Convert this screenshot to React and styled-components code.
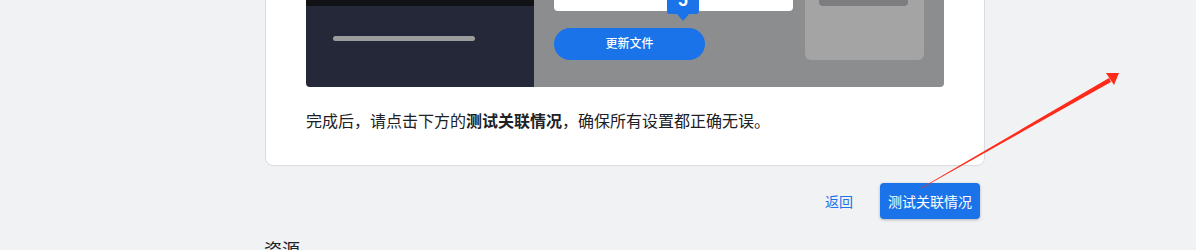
import React from 'react';
import styled, { createGlobalStyle } from 'styled-components';

const GlobalStyle = createGlobalStyle`
  html, body {
    margin: 0;
    padding: 0;
    background: #f1f2f4;
    font-family: Roboto, "Noto Sans CJK SC", sans-serif;
    color: #202124;
    overflow: hidden;
  }
`;

const Page = styled.div`
  position: relative;
  width: 1196px;
  height: 250px;
  overflow: hidden;
`;

const Content = styled.div`
  width: 720px;
  margin: -60px 0 0 265px;
`;

const Card = styled.div`
  background: #fff;
  border: 1px solid #dadce0;
  border-radius: 8px;
  padding: 20px 40px 31px 40px;
`;

const Shot = styled.div`
  display: flex;
  height: 126px;
  border-radius: 0 0 4px 4px;
  overflow: hidden;
`;

const DarkSide = styled.div`
  width: 228px;
  background: #242838;
  display: flex;
  flex-direction: column;
`;

const TopStrip = styled.div`
  height: 45px;
  background: #111216;
`;

const SideBar = styled.div`
  margin: 30px 0 0 27px;
  width: 142px;
  height: 5px;
  border-radius: 3px;
  background: #9c9c9c;
`;

const GreySide = styled.div`
  flex: 1;
  background: #8c8d8f;
  display: flex;
  gap: 12px;
  padding-left: 20px;
`;

const FormCol = styled.div`
  width: 239px;
  display: flex;
  flex-direction: column;
`;

const InputBox = styled.div`
  position: relative;
  height: 50px;
  background: #fff;
  border-radius: 0 0 4px 4px;
`;

const Badge = styled.div`
  position: absolute;
  left: 113px;
  bottom: -3px;
  width: 32px;
  height: 30px;
  background: #1a73e8;
  border-radius: 0 0 3px 3px;
  color: #fff;
  font-size: 18px;
  font-weight: 700;
  text-align: center;
  line-height: 14px;

  &::after {
    content: '';
    position: absolute;
    left: 10px;
    bottom: -7px;
    border-left: 6px solid transparent;
    border-right: 6px solid transparent;
    border-top: 7px solid #1a73e8;
  }
`;

const BadgeDigit = styled.span`
  display: block;
  margin-top: 9px;
`;

const PillButton = styled.div`
  margin-top: 17px;
  width: 151px;
  height: 32px;
  border-radius: 16px;
  background: #1a73e8;
  color: #fff;
  font-size: 12px;
  font-weight: 500;
  line-height: 32px;
  text-align: center;
`;

const SubPanel = styled.div`
  width: 119px;
  height: 99px;
  background: #a4a4a4;
  border-radius: 0 0 6px 6px;
  padding-left: 14px;
  box-sizing: border-box;
`;

const SubBar = styled.div`
  width: 89px;
  height: 45px;
  background: #7d7d80;
  border-radius: 0 0 4px 4px;
`;

const Note = styled.p`
  margin: 23px 0 0;
  font-size: 16px;
  line-height: 24px;
  color: #202124;

  b {
    font-weight: 700;
  }
`;

const Actions = styled.div`
  display: flex;
  justify-content: flex-end;
  align-items: center;
  gap: 27px;
  padding-right: 5px;
  margin-top: 17px;
`;

const LinkButton = styled.span`
  color: #1a73e8;
  font-size: 14px;
`;

const PrimaryButton = styled.button`
  height: 36px;
  padding: 0 8px;
  border: none;
  border-radius: 4px;
  background: #1a73e8;
  color: #fff;
  font-family: inherit;
  font-size: 14px;
  box-shadow: 0 1px 3px rgba(60, 64, 67, 0.35);
`;

const SectionTitle = styled.div`
  margin: 20px 0 0 -1px;
  font-size: 18px;
  line-height: 24px;
  color: #202124;
`;

const ArrowLayer = styled.svg`
  position: absolute;
  left: 0;
  top: 0;
  pointer-events: none;
`;

export default function App() {
  return (
    <Page>
      <GlobalStyle />
      <Content>
        <Card>
          <Shot>
            <DarkSide>
              <TopStrip />
              <SideBar />
            </DarkSide>
            <GreySide>
              <FormCol>
                <InputBox>
                  <Badge>
                    <BadgeDigit>5</BadgeDigit>
                  </Badge>
                </InputBox>
                <PillButton>更新文件</PillButton>
              </FormCol>
              <SubPanel>
                <SubBar />
              </SubPanel>
            </GreySide>
          </Shot>
          <Note>
            完成后，请点击下方的<b>测试关联情况</b>，确保所有设置都正确无误。
          </Note>
        </Card>
        <Actions>
          <LinkButton>返回</LinkButton>
          <PrimaryButton>测试关联情况</PrimaryButton>
        </Actions>
        <SectionTitle>资源</SectionTitle>
      </Content>
      <ArrowLayer width="1196" height="250" viewBox="0 0 1196 250">
        <polygon points="921,188 1109,78 1111,82 922,188" fill="#ff2a1a" />
        <polygon points="1106,73 1119,73 1114,85" fill="#ff2a1a" />
      </ArrowLayer>
    </Page>
  );
}
